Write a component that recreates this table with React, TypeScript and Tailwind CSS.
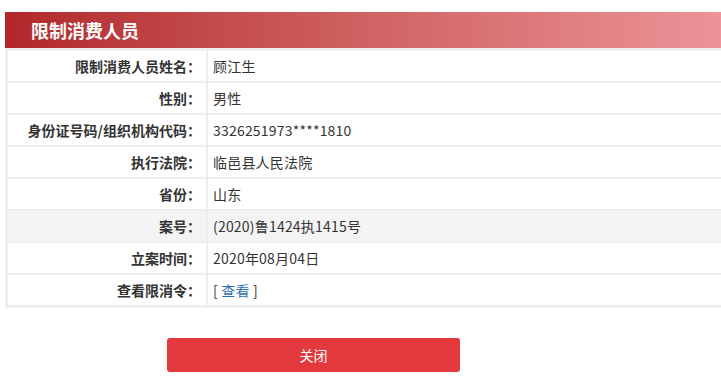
const rows: { label: string; value: React.ReactNode; shaded?: boolean }[] = [
  { label: "限制消费人员姓名：", value: "顾江生" },
  { label: "性别：", value: "男性" },
  { label: "身份证号码/组织机构代码：", value: "3326251973****1810" },
  { label: "执行法院：", value: "临邑县人民法院" },
  { label: "省份：", value: "山东" },
  { label: "案号：", value: "(2020)鲁1424执1415号", shaded: true },
  { label: "立案时间：", value: "2020年08月04日" },
  {
    label: "查看限消令：",
    value: (
      <>
        [ <a className="text-[#2d6db5] cursor-pointer">查看</a> ]
      </>
    ),
  },
];

export default function App() {
  return (
    <div
      className="w-[721px] h-[384px] overflow-hidden bg-white text-[#333]"
      style={{ fontFamily: '"Noto Sans CJK SC", "Noto Sans", sans-serif' }}
    >
      <div className="w-[780px] pt-[12px] pl-[5px]">
        {/* title bar */}
        <div className="h-[36px] flex items-center pl-[26px] bg-gradient-to-r from-[#b1262a] to-[#f09ca2]">
          <h2 className="text-white text-[18px] font-bold leading-none">限制消费人员</h2>
        </div>

        <table className="w-full border-separate border-spacing-[2px] border border-[#eeeeee] bg-[#eeeeee] text-[14px]">
          <tbody>
            {rows.map((row) => (
              <tr key={row.label} className={row.shaded ? "bg-[#f4f4f4]" : "bg-white"}>
                <td className="w-[198px] h-[30px] p-0 pr-[5px] text-right font-bold align-middle">
                  {row.label}
                </td>
                <td className="h-[30px] p-0 pl-[5px] align-middle tracking-[0.2px]">{row.value}</td>
              </tr>
            ))}
          </tbody>
        </table>

        <button className="mt-[30px] ml-[162px] w-[293px] h-[34px] rounded-[3px] bg-[#e4393c] text-white text-[14px]">
          关闭
        </button>
      </div>
    </div>
  );
}
